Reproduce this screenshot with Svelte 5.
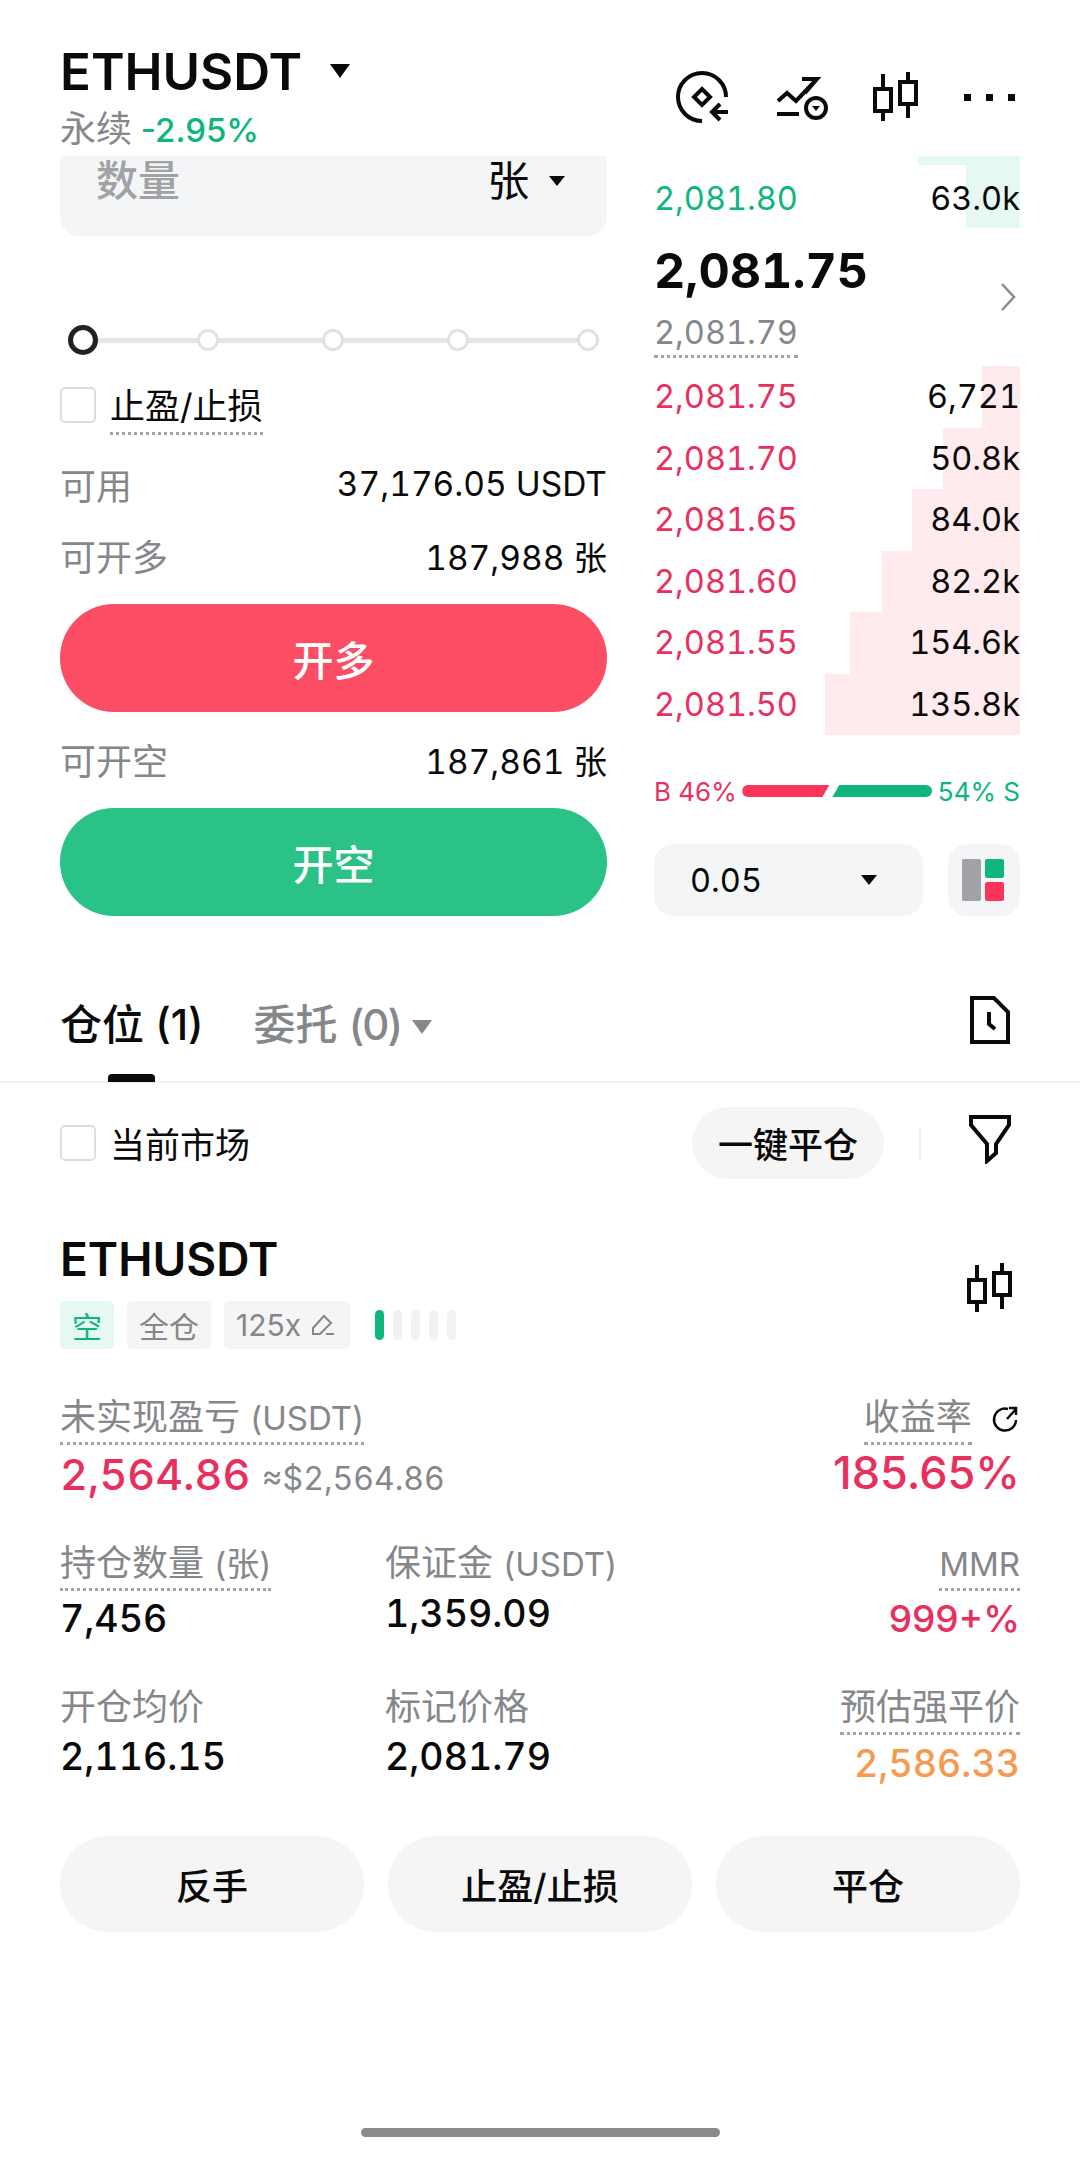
<script>
  const asks = [
    { price: '2,081.75', size: '6,721', depth: 38 },
    { price: '2,081.70', size: '50.8k', depth: 77 },
    { price: '2,081.65', size: '84.0k', depth: 108 },
    { price: '2,081.60', size: '82.2k', depth: 138 },
    { price: '2,081.55', size: '154.6k', depth: 170 },
    { price: '2,081.50', size: '135.8k', depth: 195 }
  ];
  const actions = ['反手', '止盈/止损', '平仓'];
</script>

{#snippet candles()}
  <svg class="candles" width="48" height="52" viewBox="0 0 48 52" fill="none" stroke="currentColor" stroke-width="4">
    <path d="M11 3v47M36 1v46" />
    <rect x="3" y="18" width="16" height="22" fill="#fff" />
    <rect x="28" y="11" width="16" height="22" fill="#fff" />
  </svg>
{/snippet}

<div class="page">
  <header class="top">
    <div class="symbol">
      <div class="symbol-line">
        <span class="symbol-name">ETHUSDT</span>
        <i class="caret caret-lg"></i>
      </div>
      <div class="symbol-sub"><span class="muted">永续</span> <span class="up">-2.95%</span></div>
    </div>
    <div class="top-icons">
      <svg width="54" height="54" viewBox="0 0 54 54" fill="none" stroke="#0a0a0a" stroke-width="4">
        <path d="M50 26A24 24 0 1 0 26 50" />
        <path d="M26 18l8 8-8 8-8-8z" />
        <path d="M52 41H36M44 33l-8 8 8 8" />
      </svg>
      <svg width="54" height="54" viewBox="0 0 54 54" fill="none" stroke="#0a0a0a" stroke-width="4">
        <path d="M4 30l9-8 9 8 20-21M28 8h15l-12 14" />
        <path d="M3 43h22" />
        <circle cx="42" cy="37" r="10" />
        <path d="M38 35h8l-4 5z" fill="#0a0a0a" stroke="none" />
      </svg>
      {@render candles()}
      <div class="dots"><i></i><i></i><i></i></div>
    </div>
  </header>

  <section class="trade">
    <div class="form">
      <div class="qty">
        <span class="qty-label">数量</span>
        <span class="qty-unit">张 <i class="caret caret-sm"></i></span>
      </div>
      <div class="slider">
        <span class="thumb"></span>
        <span class="stop"></span>
        <span class="stop"></span>
        <span class="stop"></span>
        <span class="stop last-stop"></span>
      </div>
      <div class="check-row">
        <span class="box"></span>
        <span class="dotted tpsl">止盈/止损</span>
      </div>
      <div class="info first"><span class="muted">可用</span><span class="amount">37,176.05 USDT</span></div>
      <div class="info"><span class="muted">可开多</span><span class="amount">187,988 张</span></div>
      <button class="cta long">开多</button>
      <div class="info after-cta"><span class="muted">可开空</span><span class="amount">187,861 张</span></div>
      <button class="cta short">开空</button>
    </div>

    <div class="book">
      <div class="bid-row">
        <i class="bid-a"></i><i class="bid-b"></i>
        <span class="up">2,081.80</span><span>63.0k</span>
      </div>
      <div class="last">
        <div>
          <div class="last-price">2,081.75</div>
          <div class="mark"><span class="dotted">2,081.79</span></div>
        </div>
        <svg width="18" height="32" viewBox="0 0 18 32" fill="none" stroke="#8a8c8f" stroke-width="2.5"><path d="M3 3l12 13L3 29" /></svg>
      </div>
      <div class="asks">
        {#each asks as row}
          <div class="ask">
            <i style="width: {row.depth}px"></i>
            <span class="down">{row.price}</span><span>{row.size}</span>
          </div>
        {/each}
      </div>
      <div class="ratio">
        <span class="down">B 46%</span>
        <div class="ratio-bars"><i class="r"></i><i class="g"></i></div>
        <span class="up">54% S</span>
      </div>
      <div class="book-foot">
        <div class="tick"><span>0.05</span><i class="caret caret-sm"></i></div>
        <div class="layout">
          <svg width="44" height="44" viewBox="0 0 44 44">
            <rect x="0" y="1" width="19" height="42" rx="2" fill="#a0a2a5" />
            <rect x="23" y="1" width="19" height="19" rx="2" fill="#0fb67b" />
            <rect x="23" y="24" width="19" height="19" rx="2" fill="#fb3559" />
          </svg>
        </div>
      </div>
    </div>
  </section>

  <nav class="tabs">
    <div class="tab active">仓位 (1)<i></i></div>
    <div class="tab">委托 <span class="count">(0)</span> <b class="caret caret-gray"></b></div>
    <svg class="doc" width="44" height="50" viewBox="0 0 44 50" fill="none" stroke="#0a0a0a" stroke-width="4">
      <path d="M4 3h22l14 14v30H4z" />
      <path d="M21 17v12l6 5" />
    </svg>
  </nav>

  <div class="filter-row">
    <span class="box"></span>
    <span class="market">当前市场</span>
    <button class="close-all">一键平仓</button>
    <span class="sep"></span>
    <svg class="funnel" width="44" height="50" viewBox="0 0 44 50" fill="none" stroke="#0a0a0a" stroke-width="4" stroke-linejoin="miter">
      <path d="M3 3h38v8L28 30v9l-9 8V30L3 11z" />
    </svg>
  </div>

  <section class="position">
    <div class="pos-head">
      <div>
        <div class="pos-name">ETHUSDT</div>
        <div class="tags">
          <span class="tag tag-short">空</span>
          <span class="tag">全仓</span>
          <span class="tag lev">125x
            <svg width="24" height="24" viewBox="0 0 24 24" fill="none" stroke="#85878a" stroke-width="2"><path d="M2 21v-6L13 3l7 7-11 11zM15 21h8" /></svg>
          </span>
          <div class="adl"><i class="on"></i><i></i><i></i><i></i><i></i></div>
        </div>
      </div>
      {@render candles()}
    </div>

    <div class="pnl">
      <div>
        <div class="lbl"><span class="dotted">未实现盈亏 <small>(USDT)</small></span></div>
        <div class="pnl-val"><span class="down">2,564.86</span> <small>≈$2,564.86</small></div>
      </div>
      <div class="right">
        <div class="lbl">
          <span class="dotted">收益率</span>
          <svg class="share" width="30" height="30" viewBox="0 0 30 30" fill="none" stroke="#0a0a0a" stroke-width="2.5">
            <path d="M18 5a11 11 0 1 0 8 11M17 15l9-10M19 4h7v7" />
          </svg>
        </div>
        <div class="pnl-val roe down">185.65%</div>
      </div>
    </div>

    <div class="stats">
      <div>
        <div class="lbl"><span class="dotted">持仓数量 <small>(张)</small></span></div>
        <div class="val low">7,456</div>
      </div>
      <div>
        <div class="lbl">保证金 <small>(USDT)</small></div>
        <div class="val">1,359.09</div>
      </div>
      <div class="right">
        <div class="lbl"><span class="dotted"><small>MMR</small></span></div>
        <div class="val low mmr down">999+%</div>
      </div>
      <div>
        <div class="lbl">开仓均价</div>
        <div class="val">2,116.15</div>
      </div>
      <div>
        <div class="lbl">标记价格</div>
        <div class="val">2,081.79</div>
      </div>
      <div class="right">
        <div class="lbl"><span class="dotted">预估强平价</span></div>
        <div class="val warn">2,586.33</div>
      </div>
    </div>

    <div class="actions">
      {#each actions as action}
        <button>{action}</button>
      {/each}
    </div>
  </section>

  <div class="home"></div>
</div>

<style>
  :global(body) {
    margin: 0;
    background: #fff;
  }

  .page {
    position: relative;
    width: 1080px;
    height: 2157px;
    overflow: hidden;
    background: #fff;
    color: #0a0a0a;
    font-family: Inter, "Noto Sans CJK SC", sans-serif;
  }

  i {
    display: block;
  }

  .muted {
    color: #85878a;
  }
  .up {
    color: #0fb67b;
  }
  .down {
    color: #e8305f;
  }

  .dotted {
    padding-bottom: 3px;
    border-bottom: 3px dotted #a0a2a5;
  }

  .caret {
    display: inline-block;
    width: 0;
    height: 0;
    border-style: solid;
    border-color: #0a0a0a transparent transparent;
  }
  .caret-lg {
    border-width: 14px 10.5px 0;
  }
  .caret-sm {
    border-width: 10px 8px 0;
  }
  .caret-gray {
    border-width: 14px 10.5px 0;
    border-top-color: #85878a;
    vertical-align: 6px;
  }

  .top {
    display: flex;
    justify-content: space-between;
    height: 156px;
    padding: 0 65px 0 60px;
    box-sizing: border-box;
  }
  .symbol {
    padding-top: 42px;
  }
  .symbol-line {
    display: flex;
    align-items: center;
    gap: 28px;
    height: 58px;
  }
  .symbol-name {
    font-size: 51px;
    font-weight: 600;
    letter-spacing: 0;
  }
  .symbol-sub {
    font-size: 33px;
    line-height: 44px;
    margin-top: 7px;
    font-weight: 500;
  }
  .symbol-sub .muted {
    font-size: 36px;
    font-weight: 400;
  }
  .top-icons {
    display: flex;
    align-items: flex-start;
    gap: 44px;
    padding-top: 71px;
    margin-left: auto;
  }
  .candles {
    display: block;
  }
  .dots {
    display: flex;
    gap: 15px;
    margin-top: 23px;
  }
  .dots i {
    width: 7px;
    height: 7px;
    background: #0a0a0a;
  }

  .trade {
    display: grid;
    grid-template-columns: 547px 364px;
    gap: 49px;
    padding: 0 60px;
  }

  .qty {
    display: flex;
    justify-content: space-between;
    box-sizing: border-box;
    height: 80px;
    padding: 0 42px 0 36px;
    background: #f4f5f6;
    border-radius: 0 0 20px 20px;
    font-size: 42px;
    line-height: 50px;
  }
  .qty-label {
    color: #a0a2a5;
    font-weight: 500;
  }
  .qty-unit {
    font-size: 42px;
  }
  .qty-unit .caret {
    vertical-align: 10px;
    margin-left: 8px;
  }

  .slider {
    display: flex;
    align-items: center;
    gap: 103px;
    width: 531px;
    height: 30px;
    margin: 89px 0 0 8px;
    background: linear-gradient(#e4e5e6, #e4e5e6) center / 100% 5px no-repeat;
  }
  .thumb {
    width: 20px;
    height: 20px;
    margin-right: -4px;
    border: 5px solid #222;
    border-radius: 50%;
    background: #fff;
  }
  .stop {
    width: 16px;
    height: 16px;
    border: 3px solid #e0e1e2;
    border-radius: 50%;
    background: #fff;
  }
  .last-stop {
    margin-left: 5px;
  }

  .box {
    width: 32px;
    height: 32px;
    flex: none;
    border: 2px solid #dcdddf;
    border-radius: 5px;
  }
  .check-row {
    display: flex;
    align-items: center;
    gap: 14px;
    margin-top: 31px;
    height: 46px;
    font-size: 35px;
  }
  .check-row .box {
    margin-top: -8px;
  }
  .tpsl {
    line-height: 44px;
    padding-bottom: 4px;
  }

  .info {
    display: flex;
    justify-content: space-between;
    align-items: center;
    height: 44px;
    margin-top: 27px;
    font-size: 36px;
  }
  .info.first {
    margin-top: 30px;
  }
  .after-cta {
    margin-top: 25px;
  }
  .amount {
    font-size: 33.5px;
    font-feature-settings: "tnum";
  }

  .cta {
    display: block;
    width: 100%;
    height: 108px;
    margin-top: 27px;
    border: 0;
    border-radius: 54px;
    color: #fff;
    font: 500 41px Inter, "Noto Sans CJK SC", sans-serif;
  }
  .long {
    background: #fb4d64;
  }
  .short {
    background: #2bc287;
  }

  .book {
    margin-left: -2px;
    font-size: 32.5px;
    font-feature-settings: "tnum";
  }
  .bid-row {
    position: relative;
    display: flex;
    justify-content: space-between;
    align-items: center;
    height: 72px;
    padding-top: 0;
  }
  .bid-row span {
    position: relative;
    top: 6px;
  }
  .bid-a {
    position: absolute;
    right: 0;
    top: 0;
    width: 102px;
    height: 9px;
    background: #e5f8f1;
  }
  .bid-b {
    position: absolute;
    right: 0;
    top: 9px;
    width: 54px;
    height: 63px;
    background: #e5f8f1;
  }

  .last {
    display: flex;
    justify-content: space-between;
    align-items: center;
    height: 138px;
  }
  .last-price {
    font-size: 48.5px;
    font-weight: 700;
    line-height: 60px;
  }
  .mark {
    margin-top: 12px;
    color: #85878a;
    line-height: 40px;
  }
  .last svg {
    margin: 0 3px 0 0;
  }

  .asks {
    display: flex;
    flex-direction: column;
  }
  .ask {
    position: relative;
    display: flex;
    justify-content: space-between;
    align-items: center;
    height: 61.5px;
  }
  .ask i {
    position: absolute;
    right: 0;
    top: 0;
    bottom: 0;
    background: #ffeaee;
  }
  .ask span {
    position: relative;
  }

  .ratio {
    display: flex;
    align-items: center;
    justify-content: space-between;
    margin-top: 40px;
    height: 32px;
    font-size: 26px;
    font-feature-settings: normal;
  }
  .ratio-bars {
    display: flex;
    gap: 3px;
  }
  .ratio-bars i {
    height: 12px;
  }
  .ratio-bars .r {
    width: 87px;
    background: #fb3559;
    border-radius: 6px 0 0 6px;
    clip-path: polygon(0 0, 100% 0, 92% 100%, 0 100%);
  }
  .ratio-bars .g {
    width: 100px;
    background: #0fb67b;
    border-radius: 0 6px 6px 0;
    clip-path: polygon(7% 0, 100% 0, 100% 100%, 0 100%);
  }

  .book-foot {
    display: flex;
    justify-content: space-between;
    margin-top: 37px;
  }
  .tick {
    display: flex;
    justify-content: space-between;
    align-items: center;
    box-sizing: border-box;
    width: 269px;
    height: 72px;
    padding: 0 46px 0 36px;
    background: #f4f5f6;
    border-radius: 20px;
  }
  .layout {
    display: flex;
    align-items: center;
    justify-content: center;
    width: 72px;
    height: 72px;
    background: #f4f5f6;
    border-radius: 20px;
  }

  .tabs {
    display: flex;
    align-items: center;
    gap: 50px;
    box-sizing: border-box;
    height: 163px;
    margin-top: 4px;
    padding: 42px 60px 0;
    border-bottom: 2px solid #f0f1f2;
    font-size: 42px;
    font-weight: 500;
  }
  .tab {
    position: relative;
    height: 121px;
    line-height: 128px;
    color: #85878a;
  }
  .tab.active {
    color: #0a0a0a;
  }
  .tab.active i {
    position: absolute;
    left: 48px;
    bottom: 0;
    width: 47px;
    height: 8px;
    background: #0a0a0a;
    border-radius: 4px 4px 0 0;
  }
  .count {
    letter-spacing: -2px;
  }
  .doc {
    margin: -4px 8px 0 auto;
  }

  .filter-row {
    display: flex;
    align-items: center;
    height: 97px;
    padding: 11px 60px 0;
    font-size: 35px;
  }
  .market {
    margin-left: 14px;
  }
  .close-all {
    height: 72px;
    width: 192px;
    margin-left: auto;
    border: 0;
    border-radius: 36px;
    background: #f5f5f5;
    color: #0a0a0a;
    font: 500 35px Inter, "Noto Sans CJK SC", sans-serif;
  }
  .sep {
    width: 2px;
    height: 32px;
    margin: 0 47px 0 35px;
    background: #eee;
  }
  .funnel {
    margin: -8px 8px 0 0;
  }

  .position {
    padding: 41px 60px 0;
  }
  .pos-head {
    display: flex;
    justify-content: space-between;
    align-items: center;
  }
  .pos-head .candles {
    margin: -6px 6px 0 0;
  }
  .pos-name {
    font-size: 46px;
    font-weight: 600;
    line-height: 54px;
  }
  .tags {
    display: flex;
    align-items: center;
    gap: 13px;
    margin-top: 15px;
    font-size: 30px;
    color: #85878a;
  }
  .tag {
    display: flex;
    align-items: center;
    gap: 6px;
    height: 48px;
    padding: 0 12px;
    background: #f5f5f5;
    border-radius: 5px;
  }
  .lev {
    gap: 10px;
    padding-right: 15px;
  }
  .tag-short {
    background: #e5f8f1;
    color: #0fb67b;
  }
  .adl {
    display: flex;
    gap: 9px;
    margin-left: 12px;
  }
  .adl i {
    width: 9px;
    height: 30px;
    border-radius: 5px;
    background: #f1f2f3;
  }
  .adl .on {
    background: #0fb67b;
  }

  .pnl {
    display: flex;
    justify-content: space-between;
    margin-top: 46px;
  }
  .lbl {
    color: #85878a;
    font-size: 36px;
    line-height: 44px;
  }
  .lbl small {
    font-size: 33px;
  }
  .right {
    text-align: right;
  }
  .pnl-val {
    margin-top: 6px;
    font-size: 43px;
    font-weight: 500;
    line-height: 56px;
    font-feature-settings: "tnum";
  }
  .pnl-val small {
    margin-left: 0;
    color: #85878a;
    font-size: 32px;
    font-weight: 400;
  }
  .roe {
    font-size: 45px;
    font-feature-settings: normal;
  }
  .share {
    vertical-align: -4px;
    margin-left: 8px;
  }

  .stats {
    display: grid;
    grid-template-columns: 325px 1fr auto;
    row-gap: 42px;
    margin-top: 34px;
  }
  .val {
    font-size: 37.5px;
    font-weight: 500;
    line-height: 48px;
    margin-top: 4px;
    font-feature-settings: "tnum";
  }
  .val.low {
    margin-top: 9px;
  }
  .mmr {
    font-size: 37px;
    font-feature-settings: normal;
  }
  .warn {
    margin-top: 11px;
    color: #f59a4f;
  }

  .actions {
    display: grid;
    grid-template-columns: repeat(3, 1fr);
    gap: 24px;
    margin-top: 48px;
  }
  .actions button {
    height: 96px;
    border: 0;
    border-radius: 48px;
    background: #f5f5f5;
    color: #0a0a0a;
    font: 500 36px Inter, "Noto Sans CJK SC", sans-serif;
  }

  .home {
    position: absolute;
    left: 361px;
    top: 2128px;
    width: 359px;
    height: 9px;
    border-radius: 5px;
    background: #8a8a8a;
  }
</style>
